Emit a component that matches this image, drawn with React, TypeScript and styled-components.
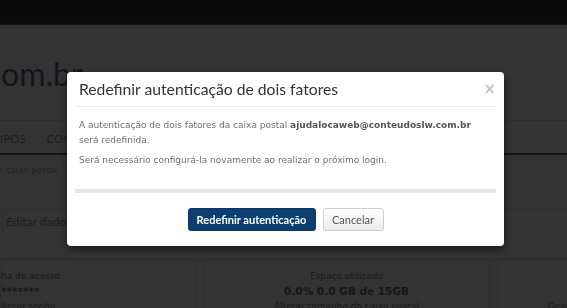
import React from "react";
import styled, { createGlobalStyle } from "styled-components";

const GlobalStyle = createGlobalStyle`
    html, body {
        margin: 0;
        padding: 0;
        width: 567px;
        height: 308px;
        overflow: hidden;
        background: #ffffff;
        font-family: "DejaVu Sans", Verdana, sans-serif;
    }
`;

const App = () => {
    return (
        <>
            <GlobalStyle />
            <Page>
                <TopBar />
                <Header>
                    <Brand>om.br</Brand>
                </Header>
                <Nav>
                    <NavItem>IPOS</NavItem>
                    <NavItem>CONTAS</NavItem>
                </Nav>
                <SearchRow>
                    <SearchHint>r caixa postal</SearchHint>
                </SearchRow>
                <Toolbar>
                    <ToolButton>Editar dados</ToolButton>
                </Toolbar>
                <Cards>
                    <Card align="left">
                        <CardLabel>ha de acesso</CardLabel>
                        <CardValue>*******</CardValue>
                        <CardLink>lterar senha</CardLink>
                    </Card>
                    <Card align="center">
                        <CardLabel>Espaço utilizado</CardLabel>
                        <CardValue>0.0% 0.0 GB de 15GB</CardValue>
                        <CardLink>Alterar tamanho da caixa postal</CardLink>
                    </Card>
                    <Card align="center">
                        <CardLabel>&nbsp;</CardLabel>
                        <CardValue>&nbsp;</CardValue>
                        <CardLink>Desabilitar</CardLink>
                    </Card>
                </Cards>
            </Page>

            <Overlay>
                <Modal>
                    <ModalHeader>
                        <ModalTitle>Redefinir autenticação de dois fatores</ModalTitle>
                        <CloseButton>×</CloseButton>
                    </ModalHeader>
                    <ModalBody>
                        <Paragraph>
                            A autenticação de dois fatores da caixa postal{" "}
                            <strong>ajudalocaweb@conteudoslw.com.br</strong>
                            <br />
                            será redefinida.
                        </Paragraph>
                        <Paragraph>
                            Será necessário configurá-la novamente ao realizar o
                            próximo login.
                        </Paragraph>
                    </ModalBody>
                    <Separator />
                    <ModalFooter>
                        <PrimaryButton>Redefinir autenticação</PrimaryButton>
                        <DefaultButton>Cancelar</DefaultButton>
                    </ModalFooter>
                </Modal>
            </Overlay>
        </>
    );
};

export default App;

const Page = styled.div`
    width: 567px;
    height: 308px;
    overflow: hidden;
    background: #ffffff;
`;

const TopBar = styled.div`
    height: 24px;
    background: linear-gradient(#2e2e2e, #3a3a3a);
    border-bottom: 1px solid #555;
`;

const Header = styled.div`
    height: 95px;
    display: flex;
    align-items: center;
    padding-left: 1px;
    border-bottom: 1px solid #e2e2e2;
`;

const Brand = styled.div`
    font-family: Lato, "Open Sans", sans-serif;
    font-size: 32px;
    color: #5d7594;
    margin-top: 2px;
`;

const Nav = styled.div`
    height: 32px;
    display: flex;
    align-items: center;
    gap: 21px;
    border-bottom: 2px solid #3a5f8c;
`;

const NavItem = styled.span`
    font-family: Lato, "Open Sans", sans-serif;
    font-size: 11px;
    color: #9a9a9a;
    letter-spacing: 0.3px;
    padding-top: 3px;
`;

const SearchRow = styled.div`
    height: 26px;
    display: flex;
    align-items: flex-end;
    padding-bottom: 0;
    box-sizing: border-box;
    border-bottom: 1px solid #e6e6e6;
    margin-bottom: 28px;
`;

const SearchHint = styled.span`
    font-size: 8.5px;
    line-height: 14px;
    padding-bottom: 3px;
    color: #b0b0b0;
`;

const Toolbar = styled.div`
    height: 49px;
    border-top: 1px solid #e6e6e6;
    border-bottom: 1px solid #e6e6e6;
    display: flex;
    align-items: flex-start;
    padding-left: 2px;
`;

const ToolButton = styled.div`
    font-family: Lato, "Open Sans", sans-serif;
    font-size: 12px;
    color: #9a9a9a;
    padding: 4px 3px;
    height: 14px;
    border-left: 1px solid #e6e6e6;
`;

const Cards = styled.div`
    display: grid;
    grid-template-columns: 197px 287px 152px;
    gap: 6px;
    margin-top: -2px;
`;

const Card = styled.div<{ align: "left" | "center" }>`
    border: 1px solid #e6e6e6;
    border-bottom: none;
    height: 60px;
    padding-top: 10px;
    display: flex;
    flex-direction: column;
    align-items: ${(props) => (props.align === "left" ? "flex-start" : "center")};
    :first-child {
        border-left: none;
    }
`;

const CardLabel = styled.div`
    font-size: 9px;
    color: #8a8a8a;
    line-height: 14px;
`;

const CardValue = styled.div`
    font-size: 10.5px;
    font-weight: bold;
    color: #7a7a7a;
    line-height: 17px;
`;

const CardLink = styled.div`
    font-size: 9px;
    color: #8a8a8a;
    line-height: 12px;
    white-space: nowrap;
`;

const Overlay = styled.div`
    position: fixed;
    inset: 0;
    background: rgba(0, 0, 0, 0.8);
`;

const Modal = styled.div`
    width: 437px;
    margin: 72px 0 0 67px;
    background: #ffffff;
    border-radius: 4px;
    box-shadow: 0 3px 9px rgba(0, 0, 0, 0.5);
    padding: 0 8px 15px;
    box-sizing: border-box;
`;

const ModalHeader = styled.div`
    height: 34px;
    display: flex;
    align-items: center;
    justify-content: space-between;
    padding: 0 0 0 4px;
    border-bottom: 1px solid #e8e8e8;
`;

const ModalTitle = styled.h4`
    margin: 0;
    font-family: Lato, "Open Sans", sans-serif;
    font-weight: normal;
    font-size: 15.7px;
    color: #333333;
`;

const CloseButton = styled.span`
    font-size: 15px;
    font-weight: bold;
    color: #c4c4c4;
    line-height: 1;
    margin-top: 1px;
`;

const ModalBody = styled.div`
    padding: 11px 4px 16px;
`;

const Paragraph = styled.p`
    margin: 0 0 5px;
    font-size: 9px;
    line-height: 15px;
    color: #6f6f6f;
    strong {
        color: #555555;
    }
`;

const Separator = styled.div`
    height: 4px;
    background: #e6e6e6;
`;

const ModalFooter = styled.div`
    display: flex;
    justify-content: center;
    gap: 7px;
    padding-top: 15px;
`;

const PrimaryButton = styled.button`
    height: 23px;
    width: 128px;
    padding: 0;
    border: 1px solid #0a3765;
    border-radius: 3px;
    background: #0b3f70;
    color: #ffffff;
    font-family: Lato, "Open Sans", sans-serif;
    font-weight: bold;
    font-size: 11px;
`;

const DefaultButton = styled.button`
    height: 23px;
    width: 61px;
    padding: 0;
    border: 1px solid #d0d0d0;
    border-radius: 3px;
    background: linear-gradient(#ffffff, #ececec);
    color: #555555;
    font-family: Lato, "Open Sans", sans-serif;
    font-size: 11px;
`;
